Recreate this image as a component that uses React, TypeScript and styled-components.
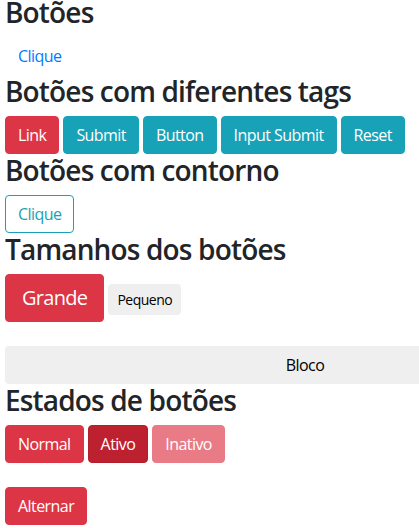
import styled, { createGlobalStyle, css } from 'styled-components'

const GlobalStyle = createGlobalStyle`
  html, body {
    margin: 0;
    overflow-x: hidden;
    background: #fff;
  }
  body {
    font-family: 'Open Sans', 'Noto Sans', sans-serif;
    font-size: 16px;
    line-height: 1.5;
    color: #212529;
  }
`

type Variant = 'danger' | 'info' | 'link' | 'outline-info' | 'plain' | 'danger-active'
type Size = 'sm' | 'md' | 'lg'

const variants: Record<Variant, ReturnType<typeof css>> = {
  danger: css`
    background: #dc3545;
    border-color: #dc3545;
    color: #fff;
  `,
  'danger-active': css`
    background: #bd2130;
    border-color: #b21f2d;
    color: #fff;
  `,
  info: css`
    background: #17a2b8;
    border-color: #17a2b8;
    color: #fff;
  `,
  link: css`
    background: transparent;
    color: #007bff;
  `,
  'outline-info': css`
    background: transparent;
    border-color: #17a2b8;
    color: #17a2b8;
  `,
  plain: css`
    background: #efefef;
    color: #000;
  `,
}

const sizes: Record<Size, ReturnType<typeof css>> = {
  sm: css`
    padding: 4px 8px;
    font-size: 14px;
    line-height: 21px;
  `,
  md: css`
    padding: 6px 12px;
    font-size: 16px;
    line-height: 24px;
  `,
  lg: css`
    padding: 8px 16px;
    font-size: 20px;
    line-height: 30px;
  `,
}

const Btn = styled.button<{ $variant: Variant; $size?: Size; $block?: boolean }>`
  display: ${(p) => (p.$block ? 'block' : 'inline-block')};
  width: ${(p) => (p.$block ? '600px' : 'auto')};
  box-sizing: border-box;
  margin: 0;
  font-family: 'Open Sans', 'Noto Sans', sans-serif;
  font-weight: 400;
  letter-spacing: -0.035em;
  text-align: center;
  text-decoration: none;
  border: 1px solid transparent;
  border-radius: 4px;
  cursor: pointer;
  ${(p) => sizes[p.$size ?? 'md']}
  ${(p) => variants[p.$variant]}

  &:disabled {
    opacity: 0.65;
    cursor: default;
  }
`

const Page = styled.div`
  padding: 0 5px;
  margin-top: -4px;
`

const Heading = styled.h3`
  margin: 0 0 8px;
  font-size: 28px;
  font-weight: 600;
  line-height: 33px;
  letter-spacing: -0.03em;
  color: #212529;
`

const Row = styled.div<{ $spaced?: boolean }>`
  display: flex;
  align-items: baseline;
  gap: 4px;
  margin-top: ${(p) => (p.$spaced ? '24px' : '0')};
`

const BlockWrap = styled.div`
  margin-top: 24px;
`

export default function App() {
  return (
    <>
      <GlobalStyle />
      <Page>
        <Heading>Botões</Heading>
        <Row>
          <Btn $variant="link">Clique</Btn>
        </Row>

        <Heading>Botões com diferentes tags</Heading>
        <Row>
          <Btn as="a" href="#" $variant="danger">
            Link
          </Btn>
          <Btn type="submit" $variant="info">
            Submit
          </Btn>
          <Btn type="button" $variant="info">
            Button
          </Btn>
          <Btn as="input" type="submit" value="Input Submit" $variant="info" />
          <Btn as="input" type="reset" value="Reset" $variant="info" />
        </Row>

        <Heading>Botões com contorno</Heading>
        <Row>
          <Btn $variant="outline-info">Clique</Btn>
        </Row>

        <Heading>Tamanhos dos botões</Heading>
        <Row>
          <Btn $variant="danger" $size="lg">
            Grande
          </Btn>
          <Btn $variant="plain" $size="sm">
            Pequeno
          </Btn>
        </Row>
        <BlockWrap>
          <Btn $variant="plain" $block>
            Bloco
          </Btn>
        </BlockWrap>

        <Heading>Estados de botões</Heading>
        <Row>
          <Btn $variant="danger">Normal</Btn>
          <Btn $variant="danger-active">Ativo</Btn>
          <Btn $variant="danger" disabled>
            Inativo
          </Btn>
        </Row>
        <Row $spaced>
          <Btn $variant="danger">Alternar</Btn>
        </Row>
      </Page>
    </>
  )
}
